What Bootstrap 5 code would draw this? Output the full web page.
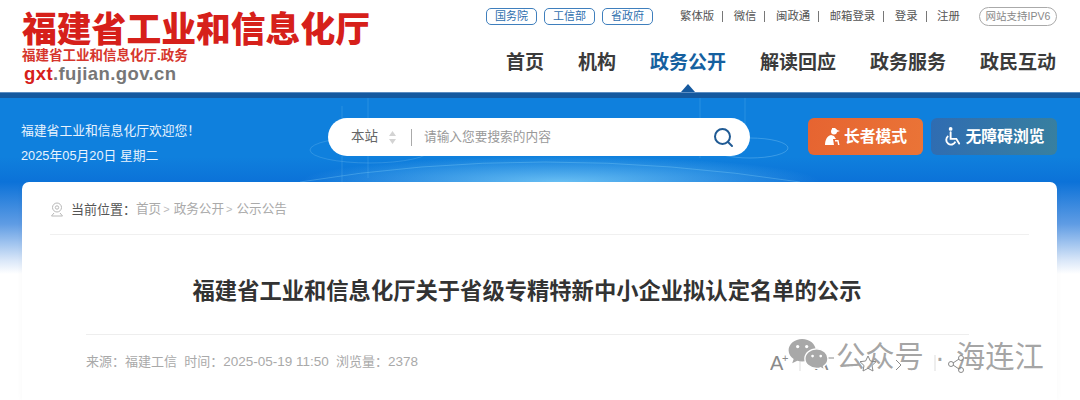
<!DOCTYPE html>
<html lang="zh-CN">
<head>
    <meta charset="UTF-8">
    <meta name="viewport" content="width=device-width, initial-scale=1.0">
    <title>福建省工业和信息化厅</title>
    <link href="https://cdn.jsdelivr.net/npm/bootstrap@5.3.0/dist/css/bootstrap.min.css" rel="stylesheet">
    <style>
        html, body { height: 400px; overflow: hidden; }
        body { font-family: "Liberation Sans", "Noto Sans CJK SC", sans-serif; background: #fff; position: relative; }
        a { text-decoration: none; color: inherit; }
        .site-head { height: 92px; background: #fff; padding-left: 22px; padding-right: 23px; }
        .logo-main { font-size: 34.8px; line-height: 36px; font-weight: 900; color: #d6201a; white-space: nowrap; padding-top: 12px; }
        .logo-sub { font-size: 13.5px; line-height: 16px; font-weight: 700; color: #d6362c; white-space: nowrap; }
        .logo-url { font-size: 18.5px; line-height: 20px; font-weight: 700; color: #777; padding-left: 2px; letter-spacing: .4px; }
        .logo-url b { color: #d6201a; }
        .head-right { width: 571px; }
        .top-line { height: 34px; padding-top: 8px; font-size: 11.4px; line-height: 17px; color: #555; }
        .gov-link { border: 1px solid #3f7fbd; border-radius: 5px; color: #2f6fae; width: 51px; height: 17px; text-align: center; line-height: 15px; font-size: 11px; }
        .gov-links { gap: 7px; margin-right: 27px; }
        .util-link { padding-right: 8px; margin-right: 10.5px; border-right: 1px solid #777; line-height: 11px; white-space: nowrap; }
        .util-link:last-of-type { border-right: 0; padding-right: 0; margin-right: 0; }
        .ipv6 { border: 1px solid #aaa; border-radius: 10px; width: 78px; height: 19px; line-height: 17px; text-align: center; color: #888; font-size: 10.5px; margin-left: auto; margin-top: -1px; white-space: nowrap; }
        .main-nav { font-size: 19px; font-weight: 700; color: #3b3b3b; line-height: 24px; margin-top: 17px; padding-right: 1px; white-space: nowrap; gap: 34px; }
        .main-nav .now { color: #15609f; position: relative; }
        .main-nav .now::after { content: ""; position: absolute; left: 31px; top: 33px; border: 7px solid transparent; border-top: 0; border-bottom: 8px solid #15599f; }
        .blue-band { height: 6px; background: #15599f; border-top: 1px solid #5b8dc2; }
        .hero { height: 84px; position: relative; background: linear-gradient(180deg, #0f80dd 0%, #0f80dd 70%, #0c72d8 100%); padding: 20px 23px 0 22px; overflow: hidden; }
        .hero-art { position: absolute; left: 0; top: 0; width: 100%; height: 100%; }
        .hero-row { position: relative; }
        .welcome { width: 306px; color: #e8f3fd; font-size: 12.8px; line-height: 25px; white-space: nowrap; margin-left: -1px; }
        .search-pill { width: 422px; height: 38px; background: #fff; border-radius: 19px; font-size: 12.7px; margin-left: 1px; }
        .scope { width: 83px; padding-left: 23px; padding-right: 14px; color: #666; font-size: 13.5px; }
        .search-tip { border-left: 1px solid #aaa; height: 17px; line-height: 17px; padding-left: 12px; color: #999; flex: 1; }
        .mode-btn { height: 37px; border-radius: 6px; color: #fff; font-size: 15.8px; font-weight: 700; white-space: nowrap; }
        .elder { width: 115px; margin-left: 58px; background: linear-gradient(100deg, #e66431, #ea7437); }
        .access { width: 126px; margin-left: 8px; background: linear-gradient(100deg, #2f6cb2, #38809f); }
        .page-bg { height: 218px; background: linear-gradient(180deg, #0c72d8 0, #5f9ce4 42px, #d8e6f8 78px, #fff 92px); padding: 0 23px 0 22px; }
        .page-card { height: 218px; background: #fff; border-radius: 7px 7px 0 0; padding: 0 28px; box-shadow: 0 0 6px rgba(0,0,0,.035); }
        .crumbs { height: 53px; padding-top: 3px; border-bottom: 1px solid #f0f0f0; font-size: 12.6px; color: #aaa; white-space: nowrap; }
        .crumbs .here { color: #555; margin: 0 0 0 7px; font-size: 13px; }
        .crumbs i { font-style: normal; font-size: 11px; color: #bbb; margin: 0 4px 0 2px; }
        .art-title { font-size: 22.3px; font-weight: 700; color: #333; text-align: center; margin: 42px 25px 0 0; line-height: 30px; white-space: nowrap; }
        .art-meta { margin: 27px 60px 0 36px; border-top: 1px solid #eee; padding-top: 18px; font-size: 13px; line-height: 18px; color: #a9a9a9; white-space: nowrap; }
        .meta-num { font-size: 13.5px; }
        .tools { position: absolute; left: 770px; top: 352px; }
        .watermark { position: absolute; left: 787px; top: 338px; display: flex; align-items: center; }
        .watermark span { font-size: 29.3px; line-height: 36px; color: rgba(130,130,130,.72); margin-left: 6px; word-spacing: 3px; white-space: nowrap; }
    </style>
</head>
<body>
    <header class="site-head d-flex justify-content-between">
        <div>
            <div class="logo-main">福建省工业和信息化厅</div>
            <div class="logo-sub">福建省工业和信息化厅.政务</div>
            <div class="logo-url"><b>gxt</b>.fujian.gov.cn</div>
        </div>
        <div class="head-right">
            <div class="top-line d-flex">
                <div class="gov-links d-flex">
                    <a class="gov-link" href="#">国务院</a>
                    <a class="gov-link" href="#">工信部</a>
                    <a class="gov-link" href="#">省政府</a>
                </div>
                <div class="d-flex align-items-center" style="height:17px">
                    <a class="util-link" href="#">繁体版</a>
                    <a class="util-link" href="#">微信</a>
                    <a class="util-link" href="#">闽政通</a>
                    <a class="util-link" href="#">邮箱登录</a>
                    <a class="util-link" href="#">登录</a>
                    <a class="util-link" href="#">注册</a>
                </div>
                <div class="ipv6">网站支持IPV6</div>
            </div>
            <nav class="main-nav d-flex justify-content-end">
                <a href="#">首页</a>
                <a href="#">机构</a>
                <a href="#" class="now">政务公开</a>
                <a href="#">解读回应</a>
                <a href="#">政务服务</a>
                <a href="#">政民互动</a>
            </nav>
        </div>
    </header>
    <div class="blue-band"></div>
    <section class="hero">
        <svg class="hero-art" viewBox="0 0 1080 84" preserveAspectRatio="none" fill="none">
            <defs>
                <radialGradient id="glow"><stop offset="0" stop-color="#7fd2fa" stop-opacity=".8"/><stop offset="1" stop-color="#7fd2fa" stop-opacity="0"/></radialGradient>
            </defs>
            <ellipse cx="560" cy="84" rx="260" ry="26" fill="url(#glow)"/>
            <ellipse cx="370" cy="52" rx="60" ry="13" stroke="#9ad8f8" opacity=".22"/>
            <ellipse cx="750" cy="50" rx="38" ry="10" stroke="#9ad8f8" opacity=".3"/>
            <path d="M342 8V84M368 0V80M700 0V60M745 0V40" stroke="#6fc0f2" opacity=".25"/>
            <path d="M300 84Q540 44 800 84" stroke="#8fd6f8" opacity=".3"/>
        </svg>
        <div class="hero-row d-flex align-items-start">
            <div class="welcome">
                <div>福建省工业和信息化厅欢迎您！</div>
                <div>2025年05月20日 星期二</div>
            </div>
            <div class="search-pill d-flex align-items-center">
                <div class="scope d-flex align-items-center justify-content-between">本站
                    <svg width="9" height="13" viewBox="0 0 9 13"><path d="M4.500 0 8 5H1zM4.500 13 1 8h7z" fill="#d3d3d3"/></svg>
                </div>
                <div class="search-tip">请输入您要搜索的内容</div>
                <svg class="me-3" width="21" height="21" viewBox="0 0 21 21" fill="none" stroke="#1f5a94" stroke-width="2"><circle cx="9.500" cy="9.500" r="7.500"/><path d="m15 15 4 4" stroke-linecap="round"/></svg>
            </div>
            <a class="mode-btn elder d-flex align-items-center justify-content-center gap-1" href="#">
                <svg width="16" height="17" viewBox="0 0 16 17" fill="#fff"><circle cx="10" cy="3.600" r="3"/><path d="M8 0h3l2 2 3 1-3 1H8z"/><path d="M1 17c0-5 2-9 6-10l3 1 2 3H9l1 6z"/><path d="M11 12h3.500l1 5H14l-.6-3.500H11z"/></svg>长者模式</a>
            <a class="mode-btn access d-flex align-items-center justify-content-center gap-1" href="#">
                <svg width="18" height="21" viewBox="0 0 19 21" fill="none" stroke="#fff" stroke-width="2"><circle cx="7" cy="2.500" r="2" fill="#fff" stroke="none"/><path d="M7 6v7h6l3 5" stroke-linecap="round"/><path d="M4.500 10a5 5 0 1 0 7.500 6"/></svg>无障碍浏览</a>
        </div>
    </section>
    <div class="page-bg">
        <main class="page-card">
            <div class="crumbs d-flex align-items-center">
                <svg width="14" height="15" viewBox="0 0 14 15" fill="none" stroke="#b8b8b8"><circle cx="7" cy="5.500" r="4.500"/><circle cx="7" cy="5.500" r="1.700"/><path d="M4 11 1.500 14h11L10 11"/></svg>
                <span class="here">当前位置：</span>首页<i>&gt;</i>政务公开<i>&gt;</i>公示公告
            </div>
            <h1 class="art-title">福建省工业和信息化厅关于省级专精特新中小企业拟认定名单的公示</h1>
            <div class="art-meta">来源：福建工信&nbsp;&nbsp;时间：<span class="meta-num">2025-05-19 11:50</span>&nbsp;&nbsp;浏览量：<span class="meta-num">2378</span></div>
        </main>
    </div>
    <svg class="tools" width="200" height="24" viewBox="0 0 200 24" fill="none" stroke="#8a8a8a">
        <text x="0" y="18" font-size="20" fill="#8a8a8a" stroke="none" font-family="Liberation Sans">A</text>
        <text x="12" y="10" font-size="11" fill="#8a8a8a" stroke="none" font-family="Liberation Sans">+</text>
        <path d="M30 3v16" stroke="#ddd"/>
        <text x="45" y="18" font-size="20" fill="#8a8a8a" stroke="none" font-family="Liberation Sans">A</text>
        <path d="M58 6h6"/>
        <path d="m98 4 2.400 5 5.600.7-4 3.800 1 5.500-5-2.700-5 2.700 1-5.500-4-3.800 5.600-.7z"/>
        <path d="m126 8 5 5-5 5"/>
        <path d="M165 3v16" stroke="#ddd"/>
        <circle cx="181" cy="12" r="2.500"/><circle cx="191" cy="6" r="2.500"/><circle cx="191" cy="18" r="2.500"/>
        <path d="m183 11 6-4M183 13l6 4"/>
    </svg>
    <div class="watermark">
        <svg width="43" height="38" viewBox="0 0 46 42">
            <path d="M16 1C7.700 1 1 6.600 1 13.500c0 4 2.200 7.400 5.600 9.700L5 28l5.600-2.900c1.700.5 3.500.8 5.400.8 8.300 0 15-5.600 15-12.400S24.300 1 16 1z" fill="#a8a8a8"/>
            <path d="M32 12c-7.200 0-13 4.800-13 10.800S24.800 33.600 32 33.600c1.500 0 3-.2 4.300-.6l4.500 2.500-1.200-4.200c3-2 4.900-5 4.900-8.400C44.500 16.800 39.200 12 32 12z" fill="#a8a8a8" stroke="#fff" stroke-width="1.500"/>
            <circle cx="11" cy="9.500" r="1.800" fill="#fff"/><circle cx="21" cy="9.500" r="1.800" fill="#fff"/>
            <circle cx="27.500" cy="20" r="1.500" fill="#fff"/><circle cx="36.500" cy="20" r="1.500" fill="#fff"/>
        </svg>
        <span>公众号 · 海连江</span>
    </div>
    <script src="https://cdn.jsdelivr.net/npm/bootstrap@5.3.0/dist/js/bootstrap.bundle.min.js"></script>
</body>
</html>
